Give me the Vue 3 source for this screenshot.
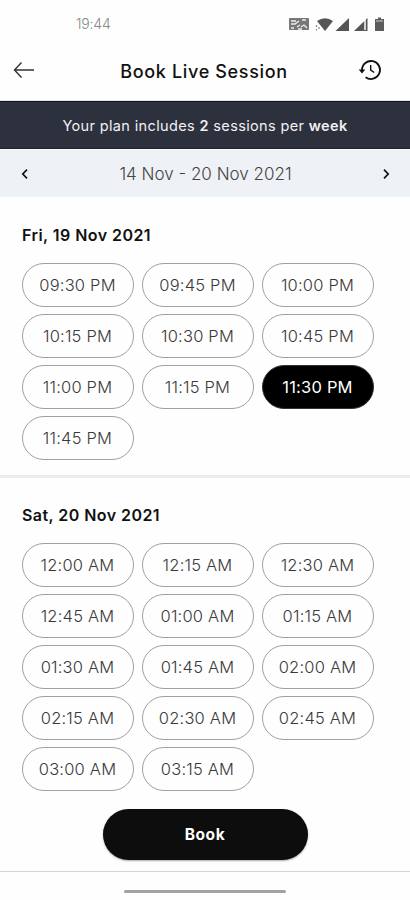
<script setup>
const days = [
  {
    title: 'Fri, 19 Nov 2021',
    kind: 'fri',
    slots: ['09:30 PM', '09:45 PM', '10:00 PM', '10:15 PM', '10:30 PM', '10:45 PM', '11:00 PM', '11:15 PM', '11:30 PM', '11:45 PM'],
  },
  {
    title: 'Sat, 20 Nov 2021',
    kind: 'sat',
    slots: ['12:00 AM', '12:15 AM', '12:30 AM', '12:45 AM', '01:00 AM', '01:15 AM', '01:30 AM', '01:45 AM', '02:00 AM', '02:15 AM', '02:30 AM', '02:45 AM', '03:00 AM', '03:15 AM'],
  },
]
const selected = '11:30 PM'
</script>

<template>
  <div class="screen">
    <div class="status">
      <span class="clock">19:44</span>
      <svg class="indicators" width="100" height="18" viewBox="0 0 100 18">
        <rect x="1" y="3" width="20" height="12" rx="1" fill="#777" />
        <path d="M3 6h5M3 9h4l4-3M3 13h3M9 12l3-2M14 5h4M13 12l3-2 3 3M10 14h4" stroke="#eee" stroke-width="1.3" fill="none" />
        <path d="M29 6Q37 .5 45 6L37 16Z" fill="#555" />
        <path d="M28.5 10v2M31 12v2M28.5 14v1.500" stroke="#888" stroke-width="1.200" />
        <path d="M61 3v13H47.500Z" fill="#555" />
        <path d="M79.500 3v13H66Z" fill="#555" />
        <path d="M77 5v10" stroke="#fff" stroke-width="1.500" />
        <path d="M90 2.500h3v1.500h3v12H87v-12h3Z" fill="#5c5c5c" />
        <path d="M88 6h7" stroke="#ccc" />
      </svg>
    </div>

    <header class="header">
      <svg width="22" height="18" viewBox="0 0 22 18" fill="none" stroke="#333" stroke-width="1.400">
        <path d="M8.500 1.500L1.500 9l7 7.500M1.500 9h19.500" />
      </svg>
      <h1>Book Live Session</h1>
      <svg width="24" height="22" viewBox="0 0 24 22" fill="none" stroke="#111">
        <path d="M4 13V11a9 9 0 1 1 3.600 7.200" stroke-width="1.800" />
        <path d="M.7 10.500h6.600L4 14.500Z" fill="#111" stroke="none" />
        <path d="M12.700 6v5.200l3.500 2.300" stroke-width="1.400" />
      </svg>
    </header>

    <div class="plan"><p>Your plan includes <b>2</b> sessions per <b>week</b></p></div>

    <nav class="week">
      <svg width="8" height="12" viewBox="0 0 8 12" fill="none" stroke="#111" stroke-width="1.700"><path d="M6 1.700L1.800 6 6 10.300" /></svg>
      <span>14 Nov - 20 Nov 2021</span>
      <svg width="8" height="12" viewBox="0 0 8 12" fill="none" stroke="#111" stroke-width="1.700"><path d="M2 1.700L6.200 6 2 10.300" /></svg>
    </nav>

    <section v-for="day in days" :key="day.title" class="day" :class="day.kind">
      <h2>{{ day.title }}</h2>
      <div class="slots">
        <button v-for="slot in day.slots" :key="slot" class="slot" :class="{ active: slot === selected }">{{ slot }}</button>
      </div>
    </section>

    <footer class="footer"><button class="book">Book</button></footer>
    <div class="home"><i></i></div>
  </div>
</template>

<style>
body { margin: 0; background: #fefefe; }
</style>

<style scoped>
* { box-sizing: border-box; }
.screen {
  width: 410px;
  height: 900px;
  display: flex;
  flex-direction: column;
  overflow: hidden;
  background: #fefefe;
  color: #111;
  font-family: Inter, "Liberation Sans", sans-serif;
}
h1, h2, p { margin: 0; }
button { font-family: inherit; padding: 0; margin: 0; white-space: nowrap; }
.status {
  height: 44px;
  flex: none;
  display: flex;
  justify-content: space-between;
  padding: 15px 22px 0 76px;
}
.clock { font-size: 14px; line-height: 18px; font-weight: 300; color: #888; letter-spacing: -0.2px; }
.header {
  height: 57px;
  flex: none;
  display: flex;
  align-items: center;
  justify-content: space-between;
  padding: 0 28px 4px 13px;
  border-bottom: 1px solid #e4e4e4;
}
h1 { font-size: 18px; font-weight: 500; letter-spacing: 0.65px; margin-left: 15px; padding-top: 2px; }
.plan {
  height: 48px;
  flex: none;
  display: flex;
  align-items: center;
  justify-content: center;
  background: #2d303d;
  border-top: 1px solid #14151c;
  border-bottom: 1px solid #20232d;
  color: #f1f1f3;
  font-size: 14.500px;
  letter-spacing: 0.36px;
}
.plan b { font-weight: 600; }
.week {
  height: 48px;
  flex: none;
  display: flex;
  align-items: center;
  justify-content: space-between;
  padding: 0 20px 0 21px;
  border-top: 1px solid #fafafa;
  background: #eef2f6;
  font-size: 17px;
  font-weight: 300;
  color: #444;
}
.day { flex: none; padding: 27px 0 0 21.500px; }
.fri { height: 281px; border-bottom: 3px solid #eaebeb; }
.sat { height: 323px; padding-top: 26px; }
h2 { font-size: 16px; line-height: 22px; font-weight: 600; letter-spacing: 0.45px; margin-bottom: 16.500px; padding-left: 0.500px; }
.slots { display: grid; grid-template-columns: repeat(3, 112px); grid-auto-rows: 44px; gap: 7.2px 8px; }
.slot {
  border: 1px solid #a0a0a0;
  border-radius: 22px;
  background: #fefefe;
  font-size: 16.500px;
  font-weight: 300;
  letter-spacing: 0.2px;
  color: #3a3a3a;
}
.slot.active { background: #000; border-color: #333; color: #fff; font-weight: 400; }
.footer { height: 71px; flex: none; display: flex; justify-content: center; padding-top: 8px; border-bottom: 1px solid #d5d5d5; }
.book {
  width: 205px;
  height: 51px;
  border: 0;
  border-radius: 26px;
  background: #0d0d0d;
  color: #fff;
  font-size: 15.500px;
  font-weight: 700;
  letter-spacing: 0.6px;
  box-shadow: 0 1px 2px #0005;
}
.home { flex: 1; display: flex; justify-content: center; padding-top: 18px; }
.home i { width: 162px; height: 3px; border-radius: 2px; background: #a2a2a2; }
</style>
